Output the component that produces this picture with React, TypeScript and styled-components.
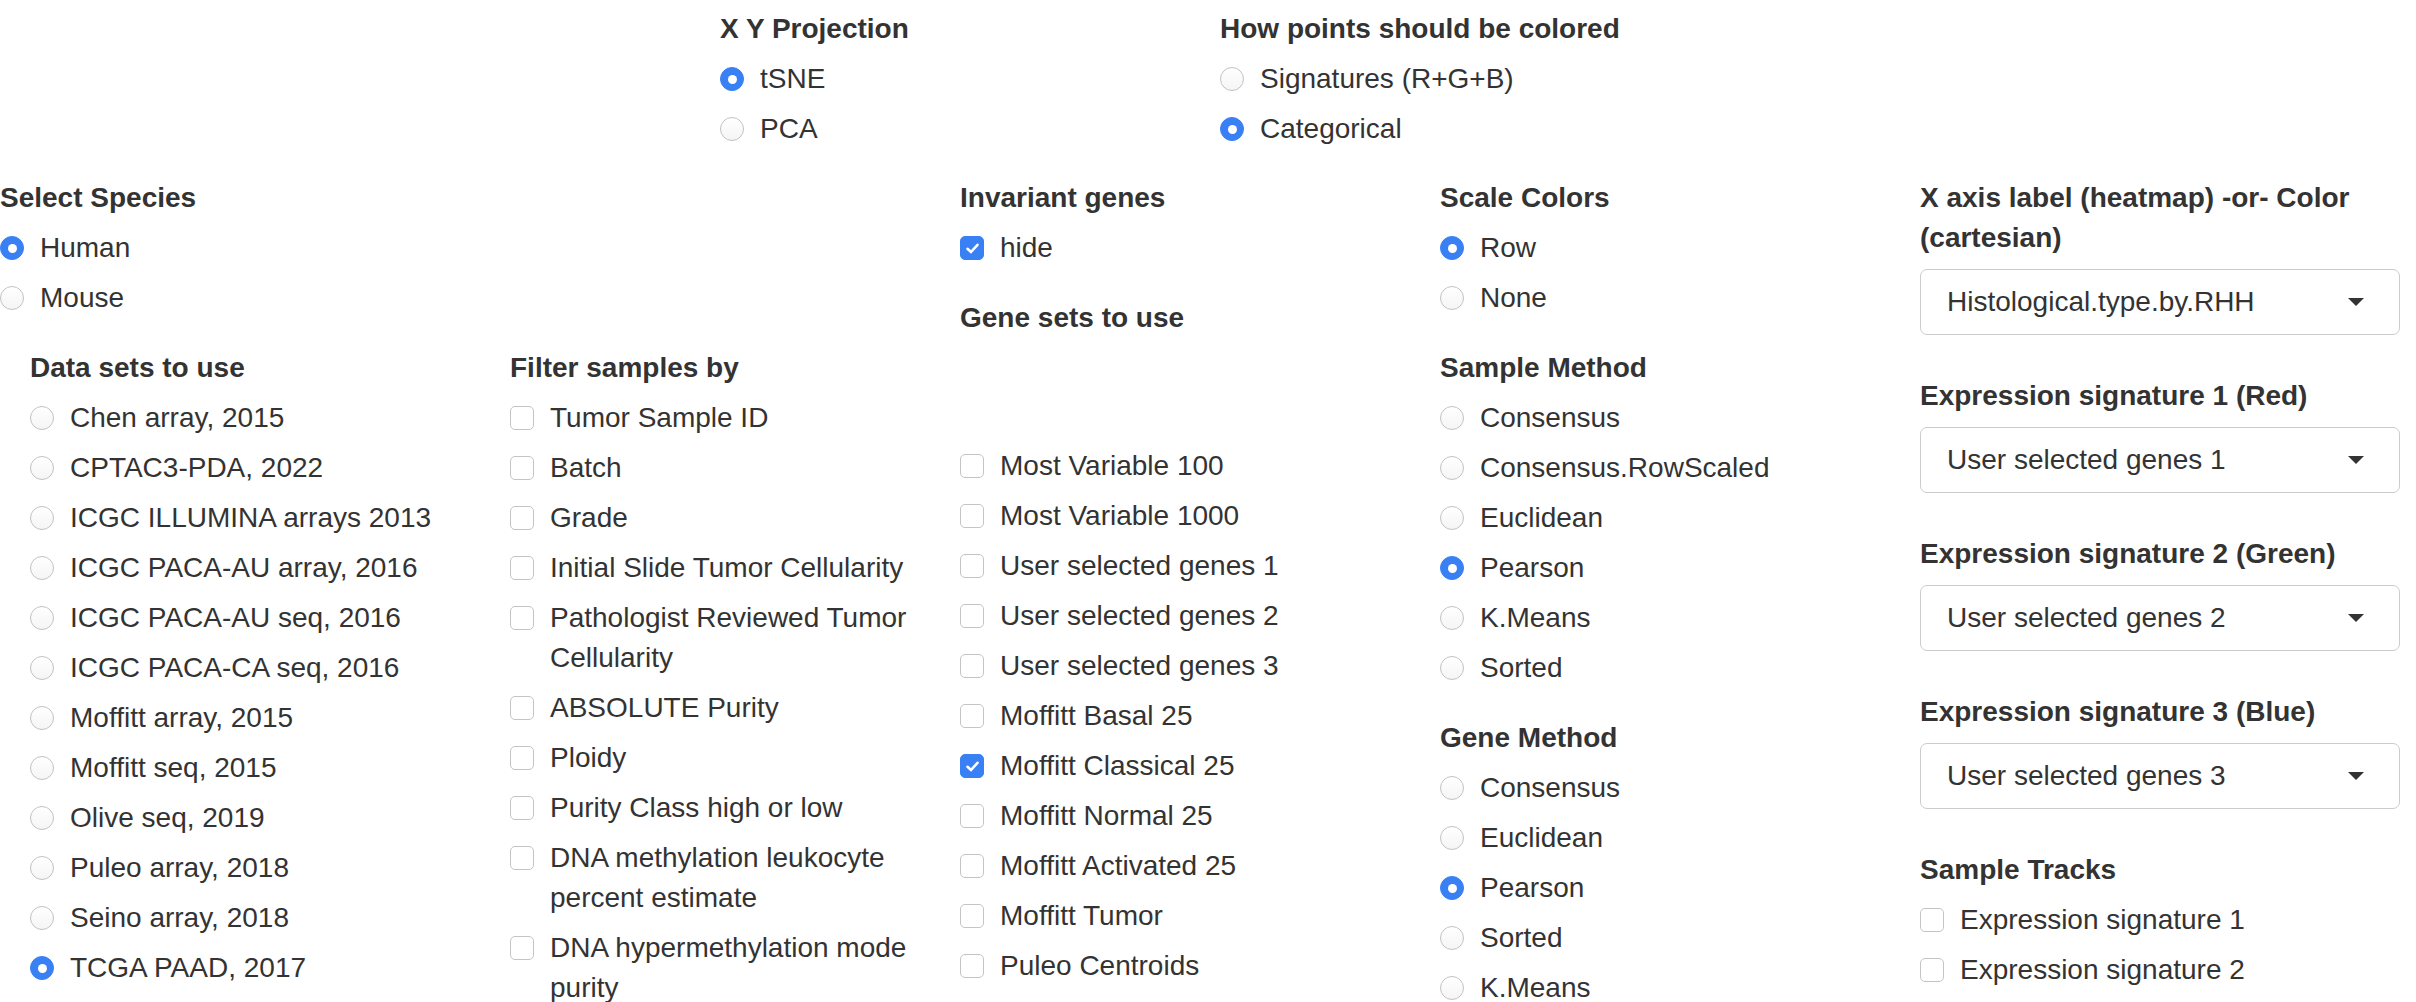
import React from 'react';
import styled, { createGlobalStyle } from 'styled-components';

const GlobalStyle = createGlobalStyle`
  html, body {
    margin: 0;
    padding: 0;
    background: #fff;
    overflow: hidden;
  }
  body {
    font-family: 'Liberation Sans', Arial, Helvetica, sans-serif;
    font-size: 28px;
    line-height: 40px;
    color: #333;
  }
`;

const Page = styled.div`
  width: 2416px;
  padding-top: 9px;
`;

const TopRow = styled.div`
  display: flex;
  padding-left: 720px;
`;

const TopCol = styled.div<{ $width?: number }>`
  width: ${(p) => (p.$width ? `${p.$width}px` : 'auto')};
`;

const MainRow = styled.div`
  display: flex;
  align-items: flex-start;
  margin-top: 29px;
`;

const Column = styled.div<{ $width: number; $gap?: number; $pad?: number }>`
  width: ${(p) => p.$width}px;
  box-sizing: border-box;
  padding: 0 ${(p) => p.$pad ?? 0}px;
  display: flex;
  flex-direction: column;
  gap: ${(p) => p.$gap ?? 30}px;
`;

const NestedRow = styled.div`
  display: flex;
  align-items: flex-start;
`;

const Field = styled.div<{ $gap?: number }>`
  display: flex;
  flex-direction: column;
  gap: ${(p) => p.$gap ?? 10}px;
`;

const Label = styled.div`
  font-weight: 700;
  line-height: 40px;
`;

const Spacer = styled.div<{ $h: number }>`
  height: ${(p) => p.$h}px;
`;

const Option = styled.label`
  display: flex;
  align-items: flex-start;
  line-height: 40px;
  cursor: pointer;
`;

const ControlSlot = styled.span`
  flex: 0 0 40px;
  height: 40px;
  display: flex;
  align-items: center;
`;

const RadioMark = styled.span<{ $on: boolean }>`
  position: relative;
  width: 24px;
  height: 24px;
  box-sizing: border-box;
  border-radius: 50%;
  border: 1px solid ${(p) => (p.$on ? '#3a80f5' : '#c2c2c2')};
  background: ${(p) => (p.$on ? '#3a80f5' : 'linear-gradient(#ffffff, #f5f5f5)')};
  &::after {
    content: '';
    display: ${(p) => (p.$on ? 'block' : 'none')};
    position: absolute;
    left: 50%;
    top: 50%;
    width: 9px;
    height: 9px;
    margin: -4.5px 0 0 -4.5px;
    border-radius: 50%;
    background: #fff;
  }
`;

const CheckMark = styled.span<{ $on: boolean }>`
  width: 24px;
  height: 24px;
  box-sizing: border-box;
  border-radius: 5px;
  border: 1px solid ${(p) => (p.$on ? '#3a80f5' : '#c4c4c4')};
  background: ${(p) => (p.$on ? '#3a80f5' : '#fff')};
  display: flex;
  align-items: center;
  justify-content: center;
`;

const OptionText = styled.span`
  flex: 1;
`;

const SelectBox = styled.div`
  height: 66px;
  box-sizing: border-box;
  border: 1px solid #cccccc;
  border-radius: 7px;
  display: flex;
  align-items: center;
  justify-content: space-between;
  padding: 0 35px 0 26px;
  background: #fff;
`;

const Caret = styled.span`
  width: 0;
  height: 0;
  border-left: 8px solid transparent;
  border-right: 8px solid transparent;
  border-top: 8px solid #333;
`;

type Item = { text: string; on?: boolean };

const Radio: React.FC<Item> = ({ text, on = false }) => (
  <Option>
    <ControlSlot>
      <RadioMark $on={on} />
    </ControlSlot>
    <OptionText>{text}</OptionText>
  </Option>
);

const Check: React.FC<Item> = ({ text, on = false }) => (
  <Option>
    <ControlSlot>
      <CheckMark $on={on}>
        {on && (
          <svg width="17" height="17" viewBox="0 0 17 17">
            <path
              d="M3.5 8.8 L7 12 L13.5 4.8"
              fill="none"
              stroke="#fff"
              strokeWidth="2.6"
              strokeLinecap="round"
              strokeLinejoin="round"
            />
          </svg>
        )}
      </CheckMark>
    </ControlSlot>
    <OptionText>{text}</OptionText>
  </Option>
);

const RadioGroup: React.FC<{ label: string; items: Item[] }> = ({ label, items }) => (
  <Field>
    <Label>{label}</Label>
    {items.map((it) => (
      <Radio key={it.text} {...it} />
    ))}
  </Field>
);

const SelectField: React.FC<{ label: string; value: string }> = ({ label, value }) => (
  <Field $gap={11}>
    <Label>{label}</Label>
    <SelectBox>
      <span>{value}</span>
      <Caret />
    </SelectBox>
  </Field>
);

const dataSets: Item[] = [
  { text: 'Chen array, 2015' },
  { text: 'CPTAC3-PDA, 2022' },
  { text: 'ICGC ILLUMINA arrays 2013' },
  { text: 'ICGC PACA-AU array, 2016' },
  { text: 'ICGC PACA-AU seq, 2016' },
  { text: 'ICGC PACA-CA seq, 2016' },
  { text: 'Moffitt array, 2015' },
  { text: 'Moffitt seq, 2015' },
  { text: 'Olive seq, 2019' },
  { text: 'Puleo array, 2018' },
  { text: 'Seino array, 2018' },
  { text: 'TCGA PAAD, 2017', on: true },
];

const filters = [
  'Tumor Sample ID',
  'Batch',
  'Grade',
  'Initial Slide Tumor Cellularity',
  'Pathologist Reviewed Tumor Cellularity',
  'ABSOLUTE Purity',
  'Ploidy',
  'Purity Class high or low',
  'DNA methylation leukocyte percent estimate',
  'DNA hypermethylation mode purity',
];

const geneSets: Item[] = [
  { text: 'Most Variable 100' },
  { text: 'Most Variable 1000' },
  { text: 'User selected genes 1' },
  { text: 'User selected genes 2' },
  { text: 'User selected genes 3' },
  { text: 'Moffitt Basal 25' },
  { text: 'Moffitt Classical 25', on: true },
  { text: 'Moffitt Normal 25' },
  { text: 'Moffitt Activated 25' },
  { text: 'Moffitt Tumor' },
  { text: 'Puleo Centroids' },
];

export default function App() {
  return (
    <>
      <GlobalStyle />
      <Page>
        <TopRow>
          <TopCol $width={500}>
            <RadioGroup label="X Y Projection" items={[{ text: 'tSNE', on: true }, { text: 'PCA' }]} />
          </TopCol>
          <TopCol>
            <RadioGroup
              label="How points should be colored"
              items={[{ text: 'Signatures (R+G+B)' }, { text: 'Categorical', on: true }]}
            />
          </TopCol>
        </TopRow>

        <MainRow>
          <Column $width={960}>
            <RadioGroup label="Select Species" items={[{ text: 'Human', on: true }, { text: 'Mouse' }]} />
            <NestedRow>
              <Column $width={480} $pad={30}>
                <RadioGroup label="Data sets to use" items={dataSets} />
              </Column>
              <Column $width={480} $pad={30}>
                <Field>
                  <Label>Filter samples by</Label>
                  {filters.map((f) => (
                    <Check key={f} text={f} />
                  ))}
                </Field>
              </Column>
            </NestedRow>
          </Column>

          <Column $width={480}>
            <Field>
              <Label>Invariant genes</Label>
              <Check text="hide" on />
            </Field>
            <Field>
              <Label>Gene sets to use</Label>
              <Spacer $h={88} />
              {geneSets.map((g) => (
                <Check key={g.text} {...g} />
              ))}
            </Field>
          </Column>

          <Column $width={480}>
            <RadioGroup label="Scale Colors" items={[{ text: 'Row', on: true }, { text: 'None' }]} />
            <RadioGroup
              label="Sample Method"
              items={[
                { text: 'Consensus' },
                { text: 'Consensus.RowScaled' },
                { text: 'Euclidean' },
                { text: 'Pearson', on: true },
                { text: 'K.Means' },
                { text: 'Sorted' },
              ]}
            />
            <RadioGroup
              label="Gene Method"
              items={[
                { text: 'Consensus' },
                { text: 'Euclidean' },
                { text: 'Pearson', on: true },
                { text: 'Sorted' },
                { text: 'K.Means' },
              ]}
            />
          </Column>

          <Column $width={480} $gap={41}>
            <SelectField label="X axis label (heatmap) -or- Color (cartesian)" value="Histological.type.by.RHH" />
            <SelectField label="Expression signature 1 (Red)" value="User selected genes 1" />
            <SelectField label="Expression signature 2 (Green)" value="User selected genes 2" />
            <SelectField label="Expression signature 3 (Blue)" value="User selected genes 3" />
            <Field>
              <Label>Sample Tracks</Label>
              <Check text="Expression signature 1" />
              <Check text="Expression signature 2" />
            </Field>
          </Column>
        </MainRow>
      </Page>
    </>
  );
}
